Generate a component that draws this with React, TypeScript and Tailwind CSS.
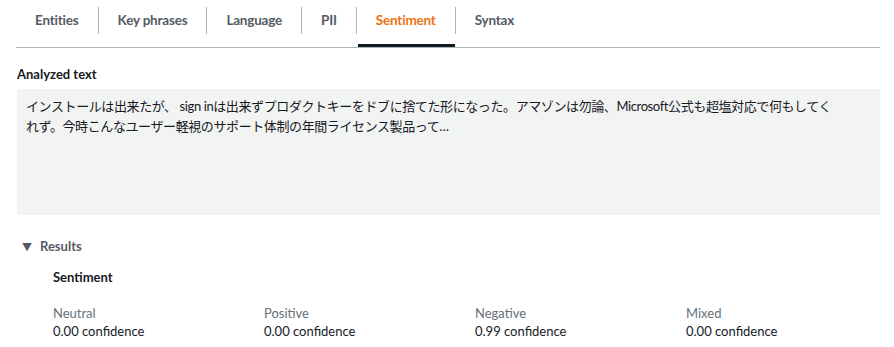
import { useState } from "react"

const tabs = ["Entities", "Key phrases", "Language", "PII", "Sentiment", "Syntax"]

const scores = [
  { label: "Neutral", value: "0.00" },
  { label: "Positive", value: "0.00" },
  { label: "Negative", value: "0.99" },
  { label: "Mixed", value: "0.00" },
]

export default function App() {
  const [active, setActive] = useState("Sentiment")

  return (
    <main
      className="min-h-screen bg-white pl-[16px] pr-[14px] text-[#16191f]"
      style={{ fontFamily: "Lato, 'Noto Sans CJK JP', sans-serif" }}
    >
      {/* Tabs */}
      <div className="flex h-[48px] border-b border-[#aab7b8]">
        {tabs.map((tab, i) => (
          <button
            key={tab}
            onClick={() => setActive(tab)}
            className={`relative flex h-[47px] items-start ${
              active === tab ? "after:absolute after:bottom-0 after:left-[2px] after:right-0 after:h-[3px] after:bg-[#16191f]" : ""
            }`}
          >
            <span
              className={`mt-[7px] flex h-[27px] items-center px-[19px] text-[13.5px] font-bold tracking-[-0.2px] ${
                i > 0 ? "border-l border-[#aab7b8]" : ""
              } ${active === tab ? "text-[#ec7211]" : "text-[#545b64]"}`}
            >
              {tab}
            </span>
          </button>
        ))}
      </div>

      {/* Analyzed text */}
      <div className="pl-px pt-[17px]">
        <div className="text-[13px] font-bold leading-[18px]">Analyzed text</div>
        <div className="mt-[6px] h-[126px] bg-[#f2f3f3] px-[9px] py-[7px] text-[13px] leading-[20px] tracking-[-0.4px] text-[#16191f]">
          インストールは出来たが、 sign inは出来ずプロダクトキーをドブに捨てた形になった。アマゾンは勿論、Microsoft公式も超塩対応で何もしてく
          <br />
          れず。今時こんなユーザー軽視のサポート体制の年間ライセンス製品って…
        </div>
      </div>

      {/* Results */}
      <div className="pt-[22px]">
        <div className="flex items-center gap-[8px] pl-[6px]">
          <span className="text-[10px] leading-none text-[#545b64]">▼</span>
          <span className="text-[13px] font-bold text-[#545b64]">Results</span>
        </div>
        <div className="pl-[37px] pt-[11px]">
          <div className="text-[13px] font-bold leading-[18px]">Sentiment</div>
          <div className="mt-[18px] grid grid-cols-[211px_211px_211px_auto]">
            {scores.map((s) => (
              <div key={s.label} className="text-[13px] leading-[18px]">
                <div className="text-[#687078]">{s.label}</div>
                <div>{s.value} confidence</div>
              </div>
            ))}
          </div>
        </div>
      </div>
    </main>
  )
}
